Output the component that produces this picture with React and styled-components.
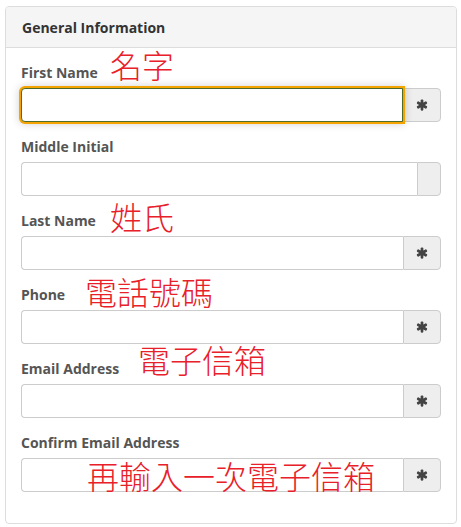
import React from 'react'
import styled, { createGlobalStyle } from 'styled-components'

const Global = createGlobalStyle`
  body {
    margin: 0;
    background: #fff;
    font-family: "Open Sans", "Liberation Sans", Arial, sans-serif;
  }
`;

const Panel = styled.div`
  margin: 6px 0 0 5px;
  width: 452px;
  box-sizing: border-box;
  border: 1px solid #ddd;
  border-radius: 4px;
  overflow: hidden;
`;

const Header = styled.div`
  height: 40px;
  display: flex;
  align-items: center;
  padding: 0 16px;
  background: #f5f5f5;
  border-bottom: 1px solid #ddd;
  font-size: 14px;
  font-weight: 700;
  color: #333;
`;

const Body = styled.div`
  padding: 16px 15px 15px;
`;

const Group = styled.div`
  position: relative;
  margin-bottom: 16px;
`;

const Label = styled.div`
  font-size: 14px;
  font-weight: 700;
  line-height: 18px;
  color: #555;
  margin-bottom: 6px;
`;

const InputGroup = styled.div`
  display: flex;
  height: 34px;
`;

const Input = styled.input`
  flex: 1;
  min-width: 0;
  box-sizing: border-box;
  height: 34px;
  padding: 6px 12px;
  font-size: 14px;
  border: 1px solid ${p => (p.$focus ? '#4f6b2a' : '#ccc')};
  border-right: ${p => (p.$focus ? '1px solid #4f6b2a' : 'none')};
  border-radius: 4px 0 0 4px;
  outline: none;
  box-shadow: ${p => (p.$focus ? '0 0 0 2px #f4a300, 0 0 8px 2px rgba(0,0,0,0.18)' : 'none')};
  position: relative;
  z-index: ${p => (p.$focus ? 1 : 0)};
`;

const Addon = styled.div`
  width: ${p => (p.$narrow ? '24px' : '38px')};
  box-sizing: border-box;
  display: flex;
  align-items: center;
  justify-content: center;
  background: #eee;
  border: 1px solid #ccc;
  border-radius: 0 4px 4px 0;
  color: #555;
`;

const Note = styled.div`
  position: absolute;
  left: ${p => p.$x}px;
  top: ${p => p.$y}px;
  font-family: "Noto Sans CJK TC", "Noto Sans CJK SC", sans-serif;
  font-weight: 300;
  font-size: 32px;
  line-height: 32px;
  color: #e8202a;
  white-space: nowrap;
  pointer-events: none;
  z-index: 2;
`;

const Asterisk = () => (
  <svg width="12" height="12" viewBox="0 0 16 16">
    <g fill="#444" transform="translate(8 8)">
      <rect x="-1.8" y="-7.5" width="3.6" height="15" rx="1.4" />
      <rect x="-1.8" y="-7.5" width="3.6" height="15" rx="1.4" transform="rotate(60)" />
      <rect x="-1.8" y="-7.5" width="3.6" height="15" rx="1.4" transform="rotate(-60)" />
      <circle r="3.6" />
    </g>
  </svg>
);

const fields = [
  { label: 'First Name', note: '名字', x: 89, y: -16 },
  { label: 'Middle Initial', optional: true },
  { label: 'Last Name', note: '姓氏', x: 89, y: -12 },
  { label: 'Phone', note: '電話號碼', x: 64, y: -11 },
  { label: 'Email Address', note: '電子信箱', x: 117, y: -17 },
  { label: 'Confirm Email Address', note: '再輸入一次電子信箱', x: 66, y: 25 },
];
fields[0].focus = true;

export default function App() {
  return (
    <>
      <Global />
      <Panel>
        <Header>General Information</Header>
        <Body>
          {fields.map(f => (
            <Group key={f.label}>
              <Label>{f.label}</Label>
              <InputGroup>
                <Input type="text" $focus={f.focus} />
                <Addon $narrow={f.optional}>{!f.optional && <Asterisk />}</Addon>
              </InputGroup>
              {f.note && <Note $x={f.x} $y={f.y}>{f.note}</Note>}
            </Group>
          ))}
        </Body>
      </Panel>
    </>
  )
}
